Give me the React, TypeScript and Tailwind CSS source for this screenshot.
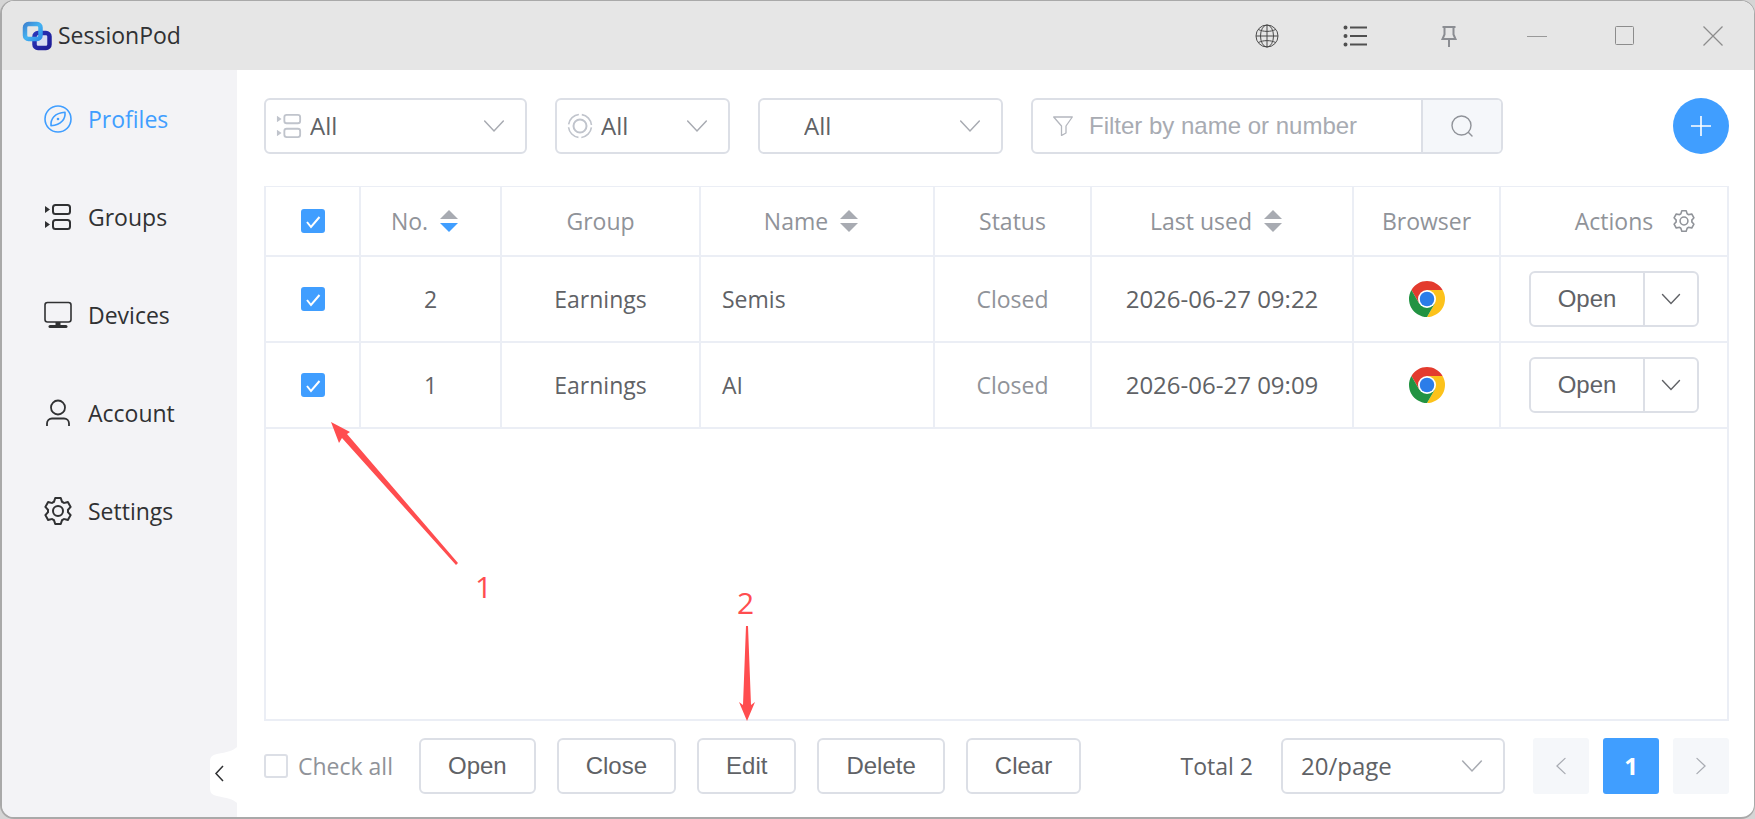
import { useState } from "react";
import type { ReactNode } from "react";

type IconProps = { className?: string };

type Profile = {
  no: number;
  group: string;
  name: string;
  status: string;
  lastUsed: string;
};

const profiles: Profile[] = [
  { no: 2, group: "Earnings", name: "Semis", status: "Closed", lastUsed: "2026-06-27 09:22" },
  { no: 1, group: "Earnings", name: "AI", status: "Closed", lastUsed: "2026-06-27 09:09" },
];

/* ── Icons ─────────────────────────────────── */
function LogoIcon() {
  return (
    <svg className="size-[30px]" viewBox="0 0 30 30" fill="none" strokeWidth="4.500" aria-hidden="true">
      <defs>
        <linearGradient id="logo-back" x1="0" y1="0" x2="1" y2="1">
          <stop offset="0" stopColor="#3f86d2" />
          <stop offset="0.500" stopColor="#45b4f2" />
          <stop offset="1" stopColor="#2f8fe8" />
        </linearGradient>
        <linearGradient id="logo-front" x1="0" y1="0" x2="1" y2="1">
          <stop offset="0" stopColor="#2a35b8" />
          <stop offset="1" stopColor="#1f1c96" />
        </linearGradient>
      </defs>
      <rect x="12.500" y="12" width="15" height="15" rx="3.500" fill="#d9dcf0" stroke="url(#logo-front)" />
      <rect x="3" y="3" width="15.500" height="15" rx="3.500" stroke="url(#logo-back)" />
    </svg>
  );
}

function CompassIcon({ className }: IconProps) {
  return (
    <svg className={className} viewBox="0 0 28 28" fill="none" stroke="currentColor" strokeWidth="1.6" aria-hidden="true">
      <circle cx="14" cy="14" r="13" />
      <path d="M21 7.2c.6 6.5-3.2 12.6-14 13.6C6.400 14 10.500 7.800 21 7.200z" strokeLinejoin="round" />
      <circle cx="14" cy="14" r="1.300" fill="currentColor" stroke="none" />
    </svg>
  );
}

function GroupsIcon({ className }: IconProps) {
  return (
    <svg className={className} viewBox="0 0 28 28" fill="none" stroke="currentColor" strokeWidth="2" aria-hidden="true">
      <rect x="9" y="2" width="17" height="9" rx="2.500" />
      <rect x="9" y="17" width="17" height="9" rx="2.500" />
      <path d="M1 3l5 3.500L1 10zM1 18l5 3.500L1 25z" fill="currentColor" stroke="none" />
    </svg>
  );
}

function DevicesIcon({ className }: IconProps) {
  return (
    <svg className={className} viewBox="0 0 28 28" fill="none" stroke="currentColor" strokeWidth="1.600" aria-hidden="true">
      <rect x="1" y="1.500" width="26" height="19.500" rx="2.500" />
      <path d="M14 21v3" strokeWidth="5" />
      <path d="M6 25.500h16" strokeWidth="3" strokeLinecap="round" />
    </svg>
  );
}

function AccountIcon({ className }: IconProps) {
  return (
    <svg className={className} viewBox="0 0 28 28" fill="none" stroke="currentColor" strokeWidth="1.800" aria-hidden="true">
      <circle cx="14" cy="8.500" r="7" />
      <path d="M3 27v-2.500a5 5 0 0 1 5-5h12a5 5 0 0 1 5 5V27" />
    </svg>
  );
}

function SettingIcon({ className }: IconProps) {
  return (
    <svg className={className} viewBox="64 64 896 896" fill="currentColor" aria-hidden="true">
      <path d="M600.704 64a32 32 0 0 1 30.464 22.208l35.200 109.376c14.784 7.232 28.928 15.360 42.432 24.512l112.384-24.192a32 32 0 0 1 34.432 15.360L944.320 364.800a32 32 0 0 1-4.032 37.504l-77.120 85.120a357.120 357.120 0 0 1 0 49.024l77.120 85.248a32 32 0 0 1 4.032 37.504l-88.704 153.600a32 32 0 0 1-34.432 15.296L708.800 803.904c-13.440 9.088-27.648 17.280-42.368 24.512l-35.264 109.376A32 32 0 0 1 600.704 960H423.296a32 32 0 0 1-30.464-22.208L357.696 828.480a351.616 351.616 0 0 1-42.560-24.640l-112.320 24.256a32 32 0 0 1-34.432-15.360L79.680 659.200a32 32 0 0 1 4.032-37.504l77.120-85.248a357.120 357.120 0 0 1 0-48.896l-77.120-85.248A32 32 0 0 1 79.680 364.800l88.704-153.600a32 32 0 0 1 34.432-15.296l112.320 24.256c13.568-9.152 27.776-17.408 42.560-24.640l35.200-109.312A32 32 0 0 1 423.232 64H600.640zm-23.424 64H446.720l-36.352 113.088-24.512 11.968a294.113 294.113 0 0 0-34.816 20.096l-22.656 15.360-116.224-25.088-65.280 113.152 79.680 88.192-1.920 27.136a293.120 293.120 0 0 0 0 40.192l1.920 27.136-79.808 88.192 65.344 113.152 116.224-25.024 22.656 15.296a294.113 294.113 0 0 0 34.816 20.096l24.512 11.968L446.720 896h130.688l36.480-113.152 24.448-11.904a288.282 288.282 0 0 0 34.752-20.096l22.592-15.296 116.288 25.024 65.280-113.152-79.744-88.192 1.920-27.136a293.120 293.120 0 0 0 0-40.256l-1.920-27.136 79.808-88.128-65.344-113.152-116.288 24.960-22.592-15.232a287.616 287.616 0 0 0-34.752-20.096l-24.448-11.904L577.344 128zM512 320a192 192 0 1 1 0 384 192 192 0 0 1 0-384zm0 64a128 128 0 1 0 0 256 128 128 0 0 0 0-256z" />
    </svg>
  );
}

function ChevronIcon({ className }: IconProps) {
  return (
    <svg className={className} viewBox="0 0 20 20" fill="none" stroke="currentColor" strokeWidth="1.400" strokeLinecap="round" aria-hidden="true">
      <path d="M1.500 5.500l8.500 9 8.500-9" />
    </svg>
  );
}

function StatusIcon() {
  return (
    <svg className="size-[26px] shrink-0 text-[#c0c4cc]" viewBox="0 0 26 26" fill="none" stroke="currentColor" aria-hidden="true">
      <circle cx="13" cy="13" r="6.500" strokeWidth="2" />
      <circle cx="13" cy="13" r="11.500" strokeWidth="1.600" strokeDasharray="15.060 3" strokeDashoffset="-1.500" />
    </svg>
  );
}

function ChromeIcon() {
  return (
    <svg className="mx-auto size-9" viewBox="0 0 48 48" role="img" aria-label="Chrome">
      <path d="M24 12h20.780A24 24 0 0 0 3.220 12L13.610 30z" fill="#e33b2e" />
      <path d="M34.390 30 24 48A24 24 0 0 0 44.780 12H24z" fill="#fcc21b" />
      <path d="M13.610 30 3.220 12A24 24 0 0 0 24 48l10.390-18z" fill="#229342" />
      <circle cx="24" cy="24" r="12" fill="#fff" />
      <circle cx="24" cy="24" r="9.700" fill="#2b7de9" />
    </svg>
  );
}

function SortIcon({ active }: { active?: boolean }) {
  return (
    <span className="flex w-[42px] justify-center">
      <svg className="h-[22px] w-[18px]" viewBox="0 0 18 22" aria-hidden="true">
        <path d="M9 0l9 9H0z" fill="#a8abb2" />
        <path d="M9 22l9-9H0z" fill={active ? "#409eff" : "#a8abb2"} />
      </svg>
    </span>
  );
}

/* ── Controls ──────────────────────────────── */
function Checkbox({
  checked,
  onChange,
  label,
}: {
  checked: boolean;
  onChange: (value: boolean) => void;
  label: string;
}) {
  return (
    <span className="grid justify-center">
      <input
        type="checkbox"
        aria-label={label}
        checked={checked}
        onChange={(e) => onChange(e.target.checked)}
        className="col-start-1 row-start-1 size-6 appearance-none rounded-[3px] border-2 border-[#dcdfe6] bg-white checked:border-[#409eff] checked:bg-[#409eff]"
      />
      <svg
        className="pointer-events-none col-start-1 row-start-1 size-6"
        viewBox="0 0 24 24"
        fill="none"
        stroke="#fff"
        strokeWidth="2"
        aria-hidden="true"
      >
        <path d="M6 13l4 5 8.500-10" />
      </svg>
    </span>
  );
}

function SelectBox({
  label,
  options,
  icon,
  className,
}: {
  label: string;
  options: string[];
  icon?: ReactNode;
  className: string;
}) {
  return (
    <div className={`flex h-14 items-center rounded-md border-2 border-[#dcdfe6] bg-white ${className}`}>
      {icon}
      <select
        aria-label={label}
        className="-mr-[22px] h-full min-w-0 flex-1 appearance-none bg-transparent text-2xl text-[#606266] outline-none"
      >
        {options.map((o) => (
          <option key={o}>{o}</option>
        ))}
      </select>
      <ChevronIcon className="pointer-events-none size-[22px] shrink-0 text-[#a8abb2]" />
    </div>
  );
}

function ActionButton({ children }: { children: ReactNode }) {
  return (
    <button
      type="button"
      className="h-14 rounded-md border-2 border-[#dcdfe6] bg-white px-[27px] font-['Liberation_Sans',sans-serif] text-2xl text-[#606266]"
    >
      {children}
    </button>
  );
}

/* ── Title bar ─────────────────────────────── */
function TitleBar() {
  return (
    <header className="flex h-[69px] shrink-0 items-center bg-[#e6e6e6] pr-[29px] pl-5">
      <LogoIcon />
      <h1 className="ml-1.5 text-[23px] text-[#303133]">SessionPod</h1>
      <div className="ml-auto flex items-center gap-16">
        <button type="button" aria-label="Language">
          <svg className="size-6 text-[#4a4a4a]" viewBox="0 0 24 24" fill="none" stroke="currentColor" strokeWidth="1" aria-hidden="true">
            <circle cx="12" cy="12" r="11" />
            <ellipse cx="12" cy="12" rx="6.500" ry="11" />
            <path d="M12 1v22M1 12h22M3.500 5.500c4.500 2.500 12.500 2.500 17 0M3.500 18.500c4.500-2.500 12.500-2.500 17 0" />
          </svg>
        </button>
        <button type="button" aria-label="Menu">
          <svg className="size-6 text-[#505050]" viewBox="0 0 24 24" fill="none" stroke="currentColor" strokeWidth="1.800" aria-hidden="true">
            <path d="M7 3.500h17M7 12h17M7 20.500h17" />
            <path d="M2.500 3.500h.01M2.500 12h.01M2.500 20.500h.01" strokeWidth="4" strokeLinecap="round" />
          </svg>
        </button>
        <button type="button" aria-label="Pin" className="ml-1.5">
          <svg className="size-6 text-[#8b8d92]" viewBox="0 0 24 24" fill="none" stroke="currentColor" strokeWidth="2" aria-hidden="true">
            <path d="M5.500 3h13M7.500 3v7.500L5.500 15h13l-2-4.500V3M12 15v8" />
          </svg>
        </button>
        <button type="button" aria-label="Minimize">
          <svg className="size-6 text-[#999]" viewBox="0 0 24 24" fill="none" stroke="currentColor" aria-hidden="true">
            <path d="M2 12.500h20" />
          </svg>
        </button>
        <button type="button" aria-label="Maximize">
          <svg className="size-6 text-[#8c8c8c]" viewBox="0 0 24 24" fill="none" stroke="currentColor" aria-hidden="true">
            <rect x="2.500" y="2.500" width="18" height="18" rx="1" />
          </svg>
        </button>
        <button type="button" aria-label="Close">
          <svg className="size-6 text-[#8c8c8c]" viewBox="0 0 24 24" fill="none" stroke="currentColor" strokeWidth="1.200" aria-hidden="true">
            <path d="M2.500 2.500l19 19M21.500 2.500l-19 19" />
          </svg>
        </button>
      </div>
    </header>
  );
}

/* ── Sidebar ───────────────────────────────── */
const navItems = [
  { label: "Profiles", Icon: CompassIcon },
  { label: "Groups", Icon: GroupsIcon },
  { label: "Devices", Icon: DevicesIcon },
  { label: "Account", Icon: AccountIcon },
  { label: "Settings", Icon: SettingIcon },
];

function Sidebar() {
  const [active, setActive] = useState("Profiles");

  return (
    <aside className="relative w-[235px] shrink-0 bg-[#f3f3f6]">
      <nav>
        {navItems.map(({ label, Icon }) => (
          <a
            key={label}
            href={`#${label.toLowerCase()}`}
            onClick={() => setActive(label)}
            aria-current={active === label ? "page" : undefined}
            className={`flex h-[98px] items-center gap-4 pl-[42px] text-[23px] ${
              active === label ? "text-[#409eff]" : "text-[#303133]"
            }`}
          >
            <Icon className="size-7 shrink-0" />
            {label}
          </a>
        ))}
      </nav>
      <button type="button" aria-label="Collapse sidebar" className="absolute right-0 bottom-3.5">
        <svg className="h-14 w-7" viewBox="0 0 28 56" fill="none" aria-hidden="true">
          <path d="M28 0C24 4 18 5 8 7C3 8 1 10 1 15V41C1 46 3 48 8 49C18 51 24 52 28 56z" fill="#fff" />
          <path d="M14 19l-7 7.500 7 7.500" stroke="#303133" strokeWidth="1.500" />
        </svg>
      </button>
    </aside>
  );
}

/* ── Filters ───────────────────────────────── */
function FilterBar() {
  return (
    <div className="flex items-center">
      <SelectBox
        label="Group"
        options={["All", "Earnings"]}
        icon={<GroupsIcon className="mr-2 size-[26px] shrink-0 text-[#c0c4cc]" />}
        className="w-[263px] pr-5 pl-2.5"
      />
      <SelectBox
        label="Status"
        options={["All", "Closed"]}
        icon={<span className="mr-2"><StatusIcon /></span>}
        className="ml-7 w-[175px] pr-5 pl-2.5"
      />
      <SelectBox label="Browser" options={["All", "Chrome"]} className="ml-7 w-[245px] pr-5 pl-11" />
      <form
        onSubmit={(e) => e.preventDefault()}
        className="ml-7 flex h-14 w-[472px] overflow-hidden rounded-md border-2 border-[#dcdfe6] font-['Liberation_Sans',sans-serif]"
      >
        <label className="flex flex-1 items-center gap-4 pl-5">
          <svg className="size-5 shrink-0 text-[#b4b7be]" viewBox="0 0 20 20" fill="none" stroke="currentColor" strokeWidth="1.300" aria-hidden="true">
            <path d="M.7 1h18.600l-6.300 9v7l-4.500 2.500V10z" strokeLinejoin="round" />
          </svg>
          <input
            type="text"
            aria-label="Filter by name or number"
            placeholder="Filter by name or number"
            className="min-w-0 flex-1 text-2xl text-[#606266] outline-none placeholder:text-[#a8abb2]"
          />
        </label>
        <button
          type="submit"
          aria-label="Search"
          className="flex w-20 items-center justify-center border-l-2 border-[#dcdfe6] bg-[#f5f7fa] text-[#909399]"
        >
          <svg className="size-[22px]" viewBox="0 0 22 22" fill="none" stroke="currentColor" strokeWidth="1.400" strokeLinecap="round" aria-hidden="true">
            <circle cx="10.500" cy="10.500" r="9.500" />
            <path d="M17.500 17.500l3.500 3.500" />
          </svg>
        </button>
      </form>
      <button
        type="button"
        aria-label="Add profile"
        className="ml-auto flex size-14 items-center justify-center rounded-full bg-[#409eff] text-white"
      >
        <svg className="size-5" viewBox="0 0 20 20" fill="none" stroke="currentColor" strokeWidth="1.600" aria-hidden="true">
          <path d="M10 0v20M0 10h20" />
        </svg>
      </button>
    </div>
  );
}

/* ── Table ─────────────────────────────────── */
function HeadCell({ children }: { children: ReactNode }) {
  return (
    <th className="h-[70px] border-r-2 border-b-2 border-[#ebeef5] p-0 font-normal last:border-r-0">
      <div className="flex items-center justify-center">{children}</div>
    </th>
  );
}

function Cell({ children, className = "" }: { children: ReactNode; className?: string }) {
  return (
    <td className={`h-[86px] border-r-2 border-b-2 border-[#ebeef5] p-0 text-center last:border-r-0 ${className}`}>
      {children}
    </td>
  );
}

function ProfileTable({
  selected,
  onSelect,
}: {
  selected: number[];
  onSelect: (next: number[]) => void;
}) {
  const toggle = (no: number, on: boolean) =>
    onSelect(on ? [...selected, no] : selected.filter((n) => n !== no));

  return (
    <div className="mt-8 flex-1 border-x-2 border-t border-b-2 border-[#ebeef5]">
      <table className="w-full table-fixed border-separate border-spacing-0 text-[23px] text-[#606266]">
        <colgroup>
          <col className="w-[95px]" />
          <col className="w-[141px]" />
          <col className="w-[199px]" />
          <col />
          <col className="w-[157px]" />
          <col className="w-[262px]" />
          <col className="w-[147px]" />
          <col className="w-[226px]" />
        </colgroup>
        <thead className="text-[#909399]">
          <tr>
            <HeadCell>
              <Checkbox
                label="Select all rows"
                checked={selected.length === profiles.length}
                onChange={(on) => onSelect(on ? profiles.map((p) => p.no) : [])}
              />
            </HeadCell>
            <HeadCell>
              No.
              <SortIcon active />
            </HeadCell>
            <HeadCell>Group</HeadCell>
            <HeadCell>
              Name
              <SortIcon />
            </HeadCell>
            <HeadCell>Status</HeadCell>
            <HeadCell>
              Last used
              <SortIcon />
            </HeadCell>
            <HeadCell>Browser</HeadCell>
            <HeadCell>
              <span className="ml-[42px]">Actions</span>
              <button type="button" aria-label="Column settings" className="ml-5">
                <SettingIcon className="size-[22px]" />
              </button>
            </HeadCell>
          </tr>
        </thead>
        <tbody>
          {profiles.map((p) => (
            <tr key={p.no}>
              <Cell>
                <Checkbox
                  label={`Select profile ${p.no}`}
                  checked={selected.includes(p.no)}
                  onChange={(on) => toggle(p.no, on)}
                />
              </Cell>
              <Cell>{p.no}</Cell>
              <Cell>{p.group}</Cell>
              <Cell className="pl-[21px] text-left">{p.name}</Cell>
              <Cell className="text-[#909399]">{p.status}</Cell>
              <Cell className="text-2xl">{p.lastUsed}</Cell>
              <Cell>
                <ChromeIcon />
              </Cell>
              <Cell>
                <div className="mx-auto flex h-14 w-[170px] rounded-md border-2 border-[#dcdfe6]">
                  <button type="button" className="flex-1 font-['Liberation_Sans',sans-serif] text-2xl">
                    Open
                  </button>
                  <button
                    type="button"
                    aria-label="More actions"
                    className="flex w-[54px] items-center justify-center border-l-2 border-[#dcdfe6]"
                  >
                    <ChevronIcon className="size-5" />
                  </button>
                </div>
              </Cell>
            </tr>
          ))}
        </tbody>
      </table>
    </div>
  );
}

/* ── Footer ────────────────────────────────── */
function FooterBar() {
  const [checkAll, setCheckAll] = useState(false);

  return (
    <div className="mt-[17px] flex items-center">
      <label className="flex items-center gap-2.5 text-[23px] text-[#909399]">
        <Checkbox label="Check all" checked={checkAll} onChange={setCheckAll} />
        Check all
      </label>
      <div className="ml-[26px] flex gap-[21px]">
        <ActionButton>Open</ActionButton>
        <ActionButton>Close</ActionButton>
        <ActionButton>Edit</ActionButton>
        <ActionButton>Delete</ActionButton>
        <ActionButton>Clear</ActionButton>
      </div>
      <span className="ml-auto text-[23px] text-[#606266]">Total 2</span>
      <SelectBox label="Page size" options={["20/page", "50/page"]} className="ml-7 w-[224px] pr-5 pl-[18px]" />
      <div className="ml-7 flex gap-3.5">
        <button type="button" aria-label="Previous page" className="flex size-14 items-center justify-center rounded-[3px] bg-[#f5f7fa] text-[#a8abb2]">
          <ChevronIcon className="size-[18px] rotate-90" />
        </button>
        <button type="button" aria-current="page" className="size-14 rounded-[3px] bg-[#409eff] text-2xl font-bold text-white">
          1
        </button>
        <button type="button" aria-label="Next page" className="flex size-14 items-center justify-center rounded-[3px] bg-[#f5f7fa] text-[#a8abb2]">
          <ChevronIcon className="size-[18px] -rotate-90" />
        </button>
      </div>
    </div>
  );
}

/* ── Step markers drawn over the window ────── */
function StepMarkers() {
  return (
    <svg className="pointer-events-none absolute top-0 left-0" width="800" height="760" fill="#ff4d4f" fontSize="30" aria-hidden="true">
      <path d="M331 422L350 432L347 434L458 563L456 565L342 438L339 443z" />
      <text x="475" y="598">1</text>
      <path d="M746 626h2l3 79 4-3-8 19-8-19 4 3z" />
      <text x="737" y="614">2</text>
    </svg>
  );
}

export default function App() {
  const [selected, setSelected] = useState<number[]>([2, 1]);

  return (
    <div className="relative h-screen bg-[#d5d5d5] font-['Open_Sans','Noto_Sans',sans-serif]">
      <div className="flex h-full flex-col overflow-hidden rounded-[14px] border-t border-r border-b-2 border-l-2 border-[#a9a9a9] bg-white">
        <TitleBar />
        <div className="flex flex-1">
          <Sidebar />
          <main className="flex min-w-0 flex-1 flex-col pt-7 pr-[25px] pb-[23px] pl-[27px]">
            <FilterBar />
            <ProfileTable selected={selected} onSelect={setSelected} />
            <FooterBar />
          </main>
        </div>
      </div>
      <StepMarkers />
    </div>
  );
}
